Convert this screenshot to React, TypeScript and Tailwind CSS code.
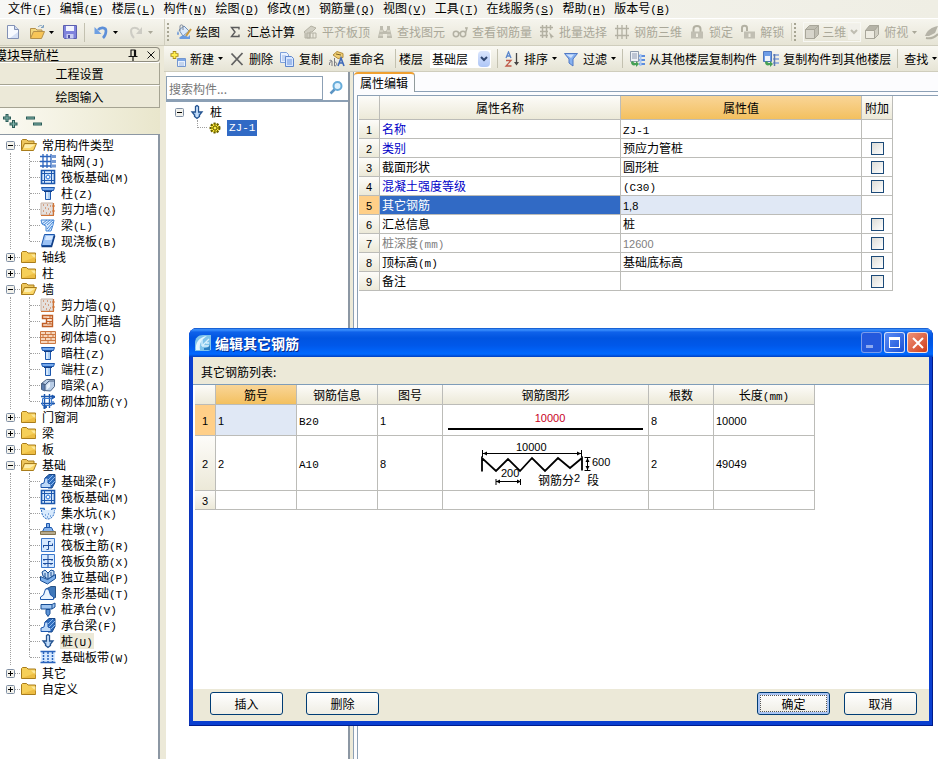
import { Fragment, useState } from 'react';
import type { ReactNode } from 'react';
import clsx from 'clsx';

/* ---------- Icons ---------- */

function Svg({ children, className }: { children: ReactNode; className?: string }) {
  return (
    <svg viewBox="0 0 16 16" className={clsx('h-4 w-4 shrink-0', className)} fill="none" aria-hidden="true">
      {children}
    </svg>
  );
}

const BLUE = '#1c57ad';
const LIGHT = '#a9cdf5';
const GRAY = '#b3b1a3';

const icons: Record<string, ReactNode> = {
  newFile: (
    <>
      <path d="M2.5 1.5h7l4 4v9h-11z" fill="#f7faff" stroke="#8291b5" />
      <path d="M9.5 1.5v4h4" fill="#cfdaf0" stroke="#8291b5" />
      <path d="M5 14h8V8z" fill="#d5e0f5" />
    </>
  ),
  open: (
    <>
      <path d="M1.5 14V4.500h5l1.500 1.500h5v3" fill="#f3d77e" stroke="#b5914a" />
      <path d="M1.500 14.500l3-7h11l-3 7z" fill="#f7c557" stroke="#b5914a" />
      <path d="M9 3c2-2 4-2 5 0M14.500 1v2.500H12" stroke="#7c9fc0" />
    </>
  ),
  save: (
    <>
      <path d="M1.500 1.500h13v13h-12l-1-1z" fill="#7f83dc" stroke="#5b5fae" />
      <path d="M4 2h8v5H4z" fill="#f2f4ff" />
      <path d="M4.500 10h7v4.500h-7z" fill="#c9cdf2" />
      <path d="M6 11h2v3H6z" fill="#4d50a0" />
    </>
  ),
  undo: (
    <>
      <path d="M5 6c2-3 8-3 8 1 0 3-1 5-3 7" stroke="#5d8fd8" strokeWidth="2.600" />
      <path d="M1.500 3v7h7z" fill="#6e9fe2" />
    </>
  ),
  redo: (
    <>
      <path d="M11 6C9 3 3 3 3 7c0 3 1 5 3 7" stroke="#cdccc4" strokeWidth="2" />
      <path d="M14 3v7H8z" fill="#cdccc4" />
    </>
  ),
  paint: (
    <>
      <path d="M3 6l5-4 5 5-6 5z" fill="#dbe9fa" stroke="#6f8fb8" />
      <path d="M4 7V2c0-1.500 3-1.500 3 0v4" stroke="#7d8799" />
      <path d="M2 7c-1 2-1 4 0 4s1-2 0-4z" fill="#4e85d6" />
      <path d="M15 5l-5 7" stroke="#c99b3f" strokeWidth="2" />
      <path d="M3 14c3-3 6-3 9-1l2-2v4H4z" fill="#6a9be0" />
    </>
  ),
  sigma: <path d="M12 5.500V3.500H4.500L8 8l-3.500 4.500H12v-2" stroke="#5b5b5b" strokeWidth="1.400" />,
  slab: (
    <>
      <path d="M2 8l7-6 5 2-4 4H8v6H3V9z" fill="#d1cfc3" stroke={GRAY} />
      <path d="M5 14V9h9v5zM8 9v5M11 9v5" stroke={GRAY} />
    </>
  ),
  binoculars: (
    <>
      <path d="M1 13l2-8V2h3v3l1 2h2l1-2V2h3v3l2 8v1h-5v-4H6v4H1z" fill="#bebcaf" />
      <path d="M3 7h3M10 7h3M2.500 11H6M10 11h3.500" stroke="#e8e6d9" />
    </>
  ),
  glasses: (
    <>
      <circle cx="4" cy="10" r="2.700" stroke={GRAY} strokeWidth="1.500" />
      <circle cx="11" cy="10" r="2.700" stroke={GRAY} strokeWidth="1.500" />
      <path d="M6.500 9h2M13.500 9l1.500-5h-2" stroke={GRAY} strokeWidth="1.500" />
    </>
  ),
  batch: (
    <>
      <path d="M1 3.500h13M1 7.500h8M1 11.500h8M3.500 1v13M7.500 1v13M11.500 1v5" stroke={GRAY} strokeWidth="1.500" />
      <path d="M10 8l5 5-2 .3L12 15z" fill={GRAY} />
    </>
  ),
  rebar3d: (
    <path d="M1 4.500h14M1 11.500h14M3.500 1v14M8 1v14M12.500 1v14" stroke={GRAY} strokeWidth="1.300" />
  ),
  lock: (
    <>
      <path d="M4.500 8V5c0-4 7-4 7 0v3" stroke={GRAY} strokeWidth="2" />
      <path d="M2 7.500h12v7H2z" fill="#c1bfb3" />
      <path d="M7 9.500h2V13H7z" fill="#efede1" />
    </>
  ),
  unlock: (
    <>
      <path d="M2 8V4c0-3 5-3 5 0v3" stroke={GRAY} strokeWidth="2" />
      <path d="M4 7.500h11v7H4z" fill="#c1bfb3" />
      <path d="M8.500 9.500h2V13h-2z" fill="#efede1" />
    </>
  ),
  cube: (
    <>
      <path d="M1.500 5.500h9v9h-9z" fill="#d7d5cb" stroke="#a8a69a" />
      <path d="M1.500 5.500l4-4h9l-4 4zM14.500 1.500v9l-4 4v-9z" fill="#c0beb2" stroke="#a8a69a" />
    </>
  ),
  cubeTop: (
    <>
      <path d="M1.500 6.500h9v8h-9z" fill="#eeece2" stroke="#a8a69a" />
      <path d="M1.500 6.500l4-5h9l-4 5z" fill="#b5b3a7" stroke="#a8a69a" />
      <path d="M14.500 1.500v9l-4 4v-8z" fill="#d1cfc3" stroke="#a8a69a" />
    </>
  ),
  orbit: (
    <>
      <path d="M1 12C3 6 8 3 14 2l-3 7-6 3z" fill="#b5b3a7" />
      <path d="M2 14c5 1 9-1 12-4" stroke={GRAY} strokeWidth="2" />
    </>
  ),
  create: (
    <>
      <path d="M4.500 0v8M.5 4h8" stroke="#a98b16" strokeWidth="3.500" />
      <path d="M4.500 1v6M1.500 4h6" stroke="#ffee52" strokeWidth="2" />
      <path d="M7.500 7.500h8v8h-8z" fill="#e9f1fd" stroke="#7396cf" />
      <path d="M8 8h7v2H8z" fill="#7ca6e6" />
      <path d="M9 12h5M9 14h5" stroke="#a0b8dd" />
    </>
  ),
  cross: <path d="M2.500 2.500l11 11.500M13.500 2L2.500 14" stroke="#626262" strokeWidth="1.800" />,
  copy: (
    <>
      <path d="M1.500 1.500h6l2 2v8h-8z" fill="#e7f0ff" stroke="#7da0da" />
      <path d="M3 5h4M3 7h4M3 9h4" stroke="#9db8e6" />
      <path d="M6.500 5.500h6l2 2v8h-8z" fill="#d7e6ff" stroke="#5e86cc" />
      <path d="M8 9h5M8 11h5M8 13h5" stroke="#6b93da" />
    </>
  ),
  rename: (
    <>
      <path d="M4 4l4-3.500 6 2v4l-5 1z" fill="#f1cf73" stroke="#b18b3b" />
      <path d="M7 3l5 1" stroke="#7d6225" />
      <path d="M.5 14c-1-3 2.500-4 2.500-4v5M3 10c-1-1-2-1-2.500 0M5.500 7v8c3 0 3-4 0-4" stroke="#7a7a80" />
      <path d="M9 15l3-8 3 8M10 12h4" stroke="#3e69b9" strokeWidth="1.600" />
    </>
  ),
  sort: (
    <>
      <path d="M2 7l2.500-6L7 7M3 5h3" stroke="#5a86cc" strokeWidth="1.300" />
      <path d="M2 9.500h5l-5 5.500h5.500" stroke="#bf5a4a" strokeWidth="1.300" />
      <path d="M12.500 2v11" stroke="#444" strokeWidth="1.300" />
      <path d="M10 11h5l-2.500 3.500z" fill="#444" />
    </>
  ),
  filter: (
    <>
      <path d="M1.500 2.500h13L10 8v7l-4-3V8z" fill="#86b1f0" stroke="#5079c5" />
      <path d="M3 3.500h8L8 7z" fill="#cfe1fb" />
    </>
  ),
  copyFloor: (
    <>
      <path d="M1.500.5h8v10h-8z" fill="#eef1f5" stroke="#8d9aab" />
      <path d="M3 3h5M3 5h5M3 7h5" stroke="#8c98b0" />
      <path d="M10 4h6v2h-6zM10 8h6v2h-6zM10 12h6v2h-6z" fill="#5d8ddd" />
      <path d="M11.500 3v12" stroke="#a9c7f4" strokeWidth="2" />
      <path d="M2 11c0 3 2 4 5 3v2l3-3-3-3v2c-2 0-2 0-3-2z" fill="#45a056" />
    </>
  ),
  copyFloorTo: (
    <>
      <path d="M.5.500h8v10h-8z" fill="#6c9ce6" stroke="#4e75bb" />
      <path d="M2 5h5v5H2z" fill="#eef3fc" />
      <path d="M10 3h6v2h-6zM10 7h6v2h-6zM10 11h6v2h-6z" fill="#9ab2dc" />
      <path d="M11.500 3v12" stroke="#5c78ad" strokeWidth="1.500" />
      <path d="M2 11c0 3 2 4 5 3v2l3-3-3-3v2c-2 0-2 0-3-2z" fill="#45a056" />
    </>
  ),
  folder: (
    <>
      <path d="M.5 13.500v-10l1-1h4l1.500 1.500h7.500v9.500z" fill="#f6cf58" stroke="#a87c1b" />
      <path d="M1 5.500h13.500V10L10 5.500z" fill="#fbe79a" />
      <path d="M1 13l13.500-5v5z" fill="#e8b035" opacity=".6" />
    </>
  ),
  folderOpen: (
    <>
      <path d="M.5 13.500v-10l1-1h4l1.500 1.500h6v3" fill="#eec75e" stroke="#a87c1b" />
      <path d="M.5 13.500l3-7h12l-3 7z" fill="#fbd768" stroke="#a87c1b" />
      <path d="M4 7.500h10L9 11H3z" fill="#fdeeae" />
    </>
  ),
  grid: (
    <path
      d="M0 3.500h11M0 8.500h11M0 13h11M3 1v14M7 1v14M11 1v14M13 2v3M13 7v3M13 11.500v3M15 2v3M15 7v3M15 11.500v3"
      stroke="#2b64bd"
      strokeWidth="1.300"
    />
  ),
  raft: (
    <>
      <path d="M1.500 1.500h13v13h-13z" fill="#d7e8fc" stroke={BLUE} strokeWidth="1.600" />
      <path d="M4.500 2v12M11.500 2v12M2 4.500h12M2 11.500h12" stroke={BLUE} />
      <path d="M8 4.500v7M4.500 8h7" stroke="#5791df" />
      <path d="M6.500 6.500h3v3h-3z" fill="#fff" stroke="#5791df" />
    </>
  ),
  column: (
    <>
      <path d="M1.500 2.500h13l-1 3h-11z" fill="#75a8ec" stroke={BLUE} />
      <path d="M5.500 5.500h5v9h-5z" fill={LIGHT} stroke={BLUE} />
      <path d="M7 6v8" stroke="#fff" />
      <path d="M4 6.500h8" stroke="#173f82" />
    </>
  ),
  shearWall: (
    <>
      <path d="M1 2h12v12H1z" fill="#e5e0dd" stroke="#c9b3a5" />
      <path d="M13.500 2v12M12 5h3M12 10h3M1 14.500h13" stroke="#d07335" strokeWidth="1.200" />
      <path d="M3 4h1M7 4h1M10 5h1M5 7h1M8 8h1M3 10h1M6 12h1M10 11h1M9 13h1" stroke="#c25f27" />
    </>
  ),
  beam: (
    <>
      <path d="M1 3h13l-1 5-2 6H6V9L2 7z" fill="#d8ebff" stroke="#4586d5" />
      <path d="M2 7l5-4M4 8l6-5M7 8l6-5M7 12l6-7M8 14l4-5" stroke="#4586d5" />
    </>
  ),
  castSlab: (
    <>
      <path d="M4.500 1.500h10l-3 11h-10z" fill="#9cc2f4" stroke={BLUE} />
      <path d="M6 3h7l-1.500 4H5z" fill="#d6e8ff" />
      <path d="M1.500 13.500h10l3.200-11" stroke="#123f85" strokeWidth="1.500" />
    </>
  ),
  doorWall: (
    <>
      <path d="M2.500 2.500h10v11h-10v-3h4v-5h-4z" fill="#fbe2cf" stroke="#c05e26" strokeWidth="1.400" />
      <path d="M7 5.500h5M7 8.500h5M7 11h5M10 3v2M10 9v2" stroke="#c05e26" />
    </>
  ),
  brick: (
    <>
      <path d="M.5 2.500h15v12H.5z" fill="#f7d7bd" stroke="#cc7842" />
      <path d="M1 5.500h14M1 8.500h14M1 11.500h14M5.500 3v2.500M11 3v2.500M8 6v2.500M3 6v2.500M13 6v2.500M5.500 9v2.500M11 9v2.500M8 12v2.500" stroke="#cc7842" />
    </>
  ),
  hiddenBeam: (
    <>
      <path d="M1.500 6.500l5-4h8v7l-4 4.500-6-.5V7z" fill="#b9cde6" stroke="#4c6385" />
      <path d="M1.500 6.500L5 8v6l-3.500-1.500z" fill="#5e7fb0" stroke="#4c6385" />
      <path d="M5 8l4-4h5" stroke="#4c6385" />
      <path d="M6.500 8.500L10 5v5l-3.500 3z" fill="#eaf2fc" />
    </>
  ),
  masonryBar: (
    <>
      <path d="M1 3.500h14M1 10.500h14M4.500 1v14M9.500 1v14" stroke={BLUE} strokeWidth="1.400" />
      <path d="M2.500 5.500h9v7h-9z" stroke="#3d7bd0" />
      <path d="M12 2l3 2-3 2zM4 12l3 2-3 2zM13 8v4" fill={BLUE} stroke={BLUE} />
    </>
  ),
  foundBeam: (
    <>
      <path d="M5 5l4-3.500h6v8L12 15H8z" fill="#2f6dbd" stroke="#174687" />
      <path d="M1 14.500V11l3-1 1-5h3v5l3 1v3.500z" fill="#bcd8f8" stroke={BLUE} />
      <path d="M8 7l5-5M9 10l6-6M11 12l4-4" stroke="#8db9ee" />
    </>
  ),
  sump: (
    <>
      <path d="M0 3.500h4l1 3 3 1 3-1 1-3h4" stroke="#2f6fc4" strokeWidth="1.400" />
      <path d="M1.500 5c0 5 2.500 9 6.500 9s6.500-4 6.500-9" fill="#d8eafd" stroke="#2f6fc4" strokeDasharray="2 1" />
      <path d="M5 10h1M8 9h1M10 11h1M7 12h1" stroke="#2f6fc4" />
    </>
  ),
  pier: (
    <>
      <path d="M6.500 2.500h3v4h-3zM2.500 10.500l2-4h7l2 4z" fill="#86b3ec" stroke={BLUE} />
      <path d="M.5 10.500h15v3H.5z" fill="#b7aa8c" stroke="#837452" />
    </>
  ),
  mainBar: (
    <>
      <path d="M1.500 1.500h13v13h-13z" fill="#d6e9ff" stroke="#3b78cb" />
      <path d="M8.500 4v8.500M3 8.500h10M3.500 8v2.500M12.500 6.500V9M6.500 12.500h2M8.500 4.500h2" stroke="#1c4d9d" />
    </>
  ),
  negBar: (
    <>
      <path d="M1.500 1.500h13v13h-13z" fill="#d6e9ff" stroke="#3b78cb" />
      <path d="M8 2v12M3 6.500h10M3 10.500h10M4 6v2M12 6v2M5 10v2M11 10v2" stroke="#1c4d9d" />
    </>
  ),
  isolated: (
    <>
      <path d="M.5 7.500l7 3 8-5v4l-8 5.500-7-3.500z" fill="#7eafe9" stroke="#174d94" />
      <path d="M3 7l-1-4 3-2 3 3 3-3 3 1v4l-6 4z" fill="#c3dbf5" stroke="#174d94" />
      <path d="M5 4v4M8 4v5M11 3v4" stroke="#174d94" />
    </>
  ),
  strip: (
    <>
      <path d="M6 4l5-2.500h4.500v11L12 14z" fill="#3e77b9" stroke="#275286" />
      <path d="M.5 14.500V12l3-2 2-6h3l2 6 3 2v2.500z" fill="#eaf4ff" stroke={BLUE} />
    </>
  ),
  cap: (
    <>
      <path d="M1 3.500h11l3-1.500v4l-3 2H1z" fill="#9fc5f1" stroke="#174d94" />
      <path d="M6 8.500h4v4l-2 3-2-3z" fill="#5e94d6" stroke="#174d94" />
      <path d="M12 4v4" stroke="#174d94" />
    </>
  ),
  pile: (
    <>
      <path d="M6.500 2.500l1.500-1 1.500 1v5.500h3.500l-2.500 3v1.500L8 14.500l-2.500-2V11L3 8h3.500z" fill="#a7caf1" stroke="#245390" strokeWidth="1.300" />
      <path d="M8 3v10" stroke="#e4f1ff" />
    </>
  ),
  strand: (
    <>
      <path d="M1 3h14v10H1z" fill="#d6e9ff" />
      <path d="M.5 2.500h15M.5 13.500h15" stroke="#2b64bd" strokeWidth="1.300" />
      <path d="M3.500 3v10M8 3v10M12.500 3v10" stroke="#2b64bd" strokeDasharray="2 1" strokeWidth="1.500" />
    </>
  ),
  gear: (
    <>
      <circle cx="8" cy="8" r="4.500" fill="#ffea35" stroke="#6a6100" strokeDasharray="2 1.200" strokeWidth="2" />
      <path d="M8 3v10M3 8h10M4.500 4.500l7 7M11.500 4.500l-7 7" stroke="#6a6100" strokeWidth=".8" />
      <circle cx="8" cy="8" r="2" fill="#fff04d" stroke="#6a6100" />
    </>
  ),
  search: (
    <>
      <circle cx="9.500" cy="6" r="4" fill="#dff1fd" stroke="#67acd9" strokeWidth="2" />
      <path d="M6.500 9.500L2.500 13.500" stroke="#5c95c4" strokeWidth="2.500" />
    </>
  ),
  plusPlus: (
    <>
      <path d="M5 1v8M1 5h8M11.500 7v8M7.500 11h8" stroke="#2b5c58" strokeWidth="3" />
      <path d="M5 2v6M2 5h6M11.500 8v6M8.500 11h6" stroke="#83b5ab" />
    </>
  ),
  minusMinus: (
    <>
      <path d="M0 5h9M7 11h9" stroke="#2b5c58" strokeWidth="3" />
      <path d="M1 5h7M8 11h7" stroke="#83b5ab" />
    </>
  ),
  pin: <path d="M5.500 3h5M6 3v6M9.500 3v6M10.500 3v6M3.500 9.500h9M8 10v4" stroke="#111" strokeWidth="1.200" />,
  close: <path d="M4.500 4.500l7 7M11.500 4.500l-7 7" stroke="#111" />,
  app: (
    <>
      <path d="M0 16V8C0 3 3 0 8 0h8v15c-2 1-4 1-6 1z" fill="#7fc3ea" />
      <path d="M1 15C0 8 4 2 12 1 7 4 4 8 5 15z" fill="#e3f6ff" />
      <path d="M7 5v6M7 11h7v3M8 10l6-6M11 8h3" stroke="#d8f1fd" strokeWidth="1.300" />
      <path d="M9 13c3 0 5-1 6-4v6H9z" fill="#2c7fc1" />
    </>
  ),
};

function Icon({ name, className }: { name: string; className?: string }) {
  return <Svg className={className}>{icons[name]}</Svg>;
}

/* Latin runs are set about half as wide as a Chinese character */
function Mono({ children }: { children: ReactNode }) {
  return <span className="font-['Liberation_Mono',monospace] text-[11px] leading-none">{children}</span>;
}

function Num({ children }: { children: ReactNode }) {
  return <span className="font-['Liberation_Sans',sans-serif] text-[11px] leading-none">{children}</span>;
}

function Mixed({ text }: { text: string }) {
  return (
    <>
      {text.split(/([ -~]+)/).map((part, i) => {
        if (/^[\d,]+$/.test(part)) return <Num key={i}>{part}</Num>;
        if (/^[ -~]+$/.test(part)) return <Mono key={i}>{part}</Mono>;
        return <Fragment key={i}>{part}</Fragment>;
      })}
    </>
  );
}

/* ---------- Menu and toolbars ---------- */

const menus = [
  ['文件', 'F'],
  ['编辑', 'E'],
  ['楼层', 'L'],
  ['构件', 'N'],
  ['绘图', 'D'],
  ['修改', 'M'],
  ['钢筋量', 'Q'],
  ['视图', 'V'],
  ['工具', 'T'],
  ['在线服务', 'S'],
  ['帮助', 'H'],
  ['版本号', 'B'],
];

function MenuBar() {
  return (
    <nav className="flex h-[18px] shrink-0 items-start gap-2 bg-gradient-to-r from-[#f7f7f5] to-[#efeee4] px-2">
      {menus.map(([label, key]) => (
        <button key={key} className="flex shrink-0 items-baseline whitespace-nowrap leading-4">
          {label}
          <Mono>
            (<u>{key}</u>)
          </Mono>
        </button>
      ))}
    </nav>
  );
}

function Arrow({ className }: { className?: string }) {
  return (
    <svg viewBox="0 0 5 3" className={clsx('h-[3px] w-[5px] shrink-0', className)} aria-hidden="true">
      <path d="M0 0h5L2.500 3z" fill="currentColor" />
    </svg>
  );
}

function Separator({ className }: { className?: string }) {
  return <span className={clsx('h-[19px] w-px shrink-0 bg-[#c3c1b0]', className)} />;
}

function Grip() {
  return <span className="h-[18px] w-0 shrink-0 border-l-2 border-dotted border-[#a7a593]" />;
}

interface ToolProps {
  icon?: string;
  label?: string;
  title?: string;
  arrow?: boolean;
  disabled?: boolean;
}

function Tool({ icon, label, title, arrow, disabled }: ToolProps) {
  return (
    <button
      disabled={disabled}
      aria-label={title ?? label}
      className="flex shrink-0 items-center gap-1 whitespace-nowrap leading-4 disabled:text-[#aaa899]"
    >
      {icon && <Icon name={icon} />}
      {label}
      {arrow && <Arrow />}
    </button>
  );
}

function MainToolbar() {
  return (
    <div className="flex h-7 shrink-0 items-center border-y border-t-white border-b-[#cfcdbd] bg-gradient-to-b from-[#f6f5ee] to-[#e6e4d5]">
      <div className="flex h-full w-[165px] shrink-0 items-center border-r border-[#cfcdbd] pl-[5px]">
        <Tool icon="newFile" title="新建" />
        <span className="ml-2 flex">
          <Tool icon="open" title="打开" arrow />
        </span>
        <span className="ml-2 flex">
          <Tool icon="save" title="保存" />
        </span>
        <Separator className="ml-1.5" />
        <span className="ml-2 flex gap-2.5">
          <Tool icon="undo" title="撤销" arrow />
          <Tool icon="redo" title="重做" arrow disabled />
        </span>
      </div>
      <div className="flex items-center gap-[7px] pl-0.5">
        <Grip />
        <Tool icon="paint" label="绘图" />
        <Tool icon="sigma" label="汇总计算" />
        <Tool icon="slab" label="平齐板顶" disabled />
        <Tool icon="binoculars" label="查找图元" disabled />
        <Tool icon="glasses" label="查看钢筋量" disabled />
        <Tool icon="batch" label="批量选择" disabled />
        <Tool icon="rebar3d" label="钢筋三维" disabled />
        <Tool icon="lock" label="锁定" disabled />
        <Tool icon="unlock" label="解锁" disabled />
        <span className="flex items-center border-l border-[#cfcdbd] pl-0.5">
          <Grip />
        </span>
        <span className="flex h-5 items-center border border-[#f8f8f4]">
          <Icon name="cube" />
          <select
            disabled
            aria-label="视图模式"
            className="w-7 appearance-none bg-transparent pl-0.5 leading-4 text-[#aaa899]"
          >
            <option>三维</option>
          </select>
          <ComboArrow disabled />
        </span>
        <span className="-ml-1 flex">
          <Tool icon="cubeTop" label="俯视" arrow disabled />
        </span>
        <Tool icon="orbit" title="动态观察" disabled />
      </div>
    </div>
  );
}

function ComboArrow({ disabled }: { disabled?: boolean }) {
  return (
    <span
      className={clsx(
        'pointer-events-none flex h-4 w-3 shrink-0 items-center justify-center',
        disabled ? 'bg-[#f1f0ea] text-[#bfbdb2]' : 'rounded-sm bg-gradient-to-b from-[#dbe6fd] to-[#aec6f6] text-[#2f4670]',
      )}
    >
      <svg viewBox="0 0 8 6" className="h-1.5 w-2" fill="none" aria-hidden="true">
        <path d="M1 1l3 3 3-3" stroke="currentColor" strokeWidth="2" />
      </svg>
    </span>
  );
}

function ComponentToolbar() {
  return (
    <div className="flex h-[26px] shrink-0 items-center gap-1.5 border-b border-[#cfcdbd] bg-gradient-to-b from-[#f9f8f2] to-[#e6e4d5] pl-1.5">
      <Tool icon="create" label="新建" arrow />
      <Tool icon="cross" label="删除" />
      <Tool icon="copy" label="复制" />
      <Tool icon="rename" label="重命名" />
      <div className="ml-1 flex items-center gap-[3px]">
        <Separator />
        <label htmlFor="floor" className="shrink-0">楼层</label>
        <span className="ml-1 flex h-[18px] items-center bg-white pr-px">
          <select id="floor" className="w-[48px] appearance-none bg-transparent pl-0.5 leading-4 outline-none">
            <option>基础层</option>
          </select>
          <ComboArrow />
        </span>
      </div>
      <Separator />
      <Tool icon="sort" label="排序" arrow />
      <Tool icon="filter" label="过滤" arrow />
      <Separator />
      <Tool icon="copyFloor" label="从其他楼层复制构件" />
      <Tool icon="copyFloorTo" label="复制构件到其他楼层" />
      <Separator />
      <Tool label="查找" arrow />
    </div>
  );
}

/* ---------- Navigation tree ---------- */

interface Group {
  label: string;
  items?: [string, string][];
}

const groups: Group[] = [
  {
    label: '常用构件类型',
    items: [
      ['grid', '轴网(J)'],
      ['raft', '筏板基础(M)'],
      ['column', '柱(Z)'],
      ['shearWall', '剪力墙(Q)'],
      ['beam', '梁(L)'],
      ['castSlab', '现浇板(B)'],
    ],
  },
  { label: '轴线' },
  { label: '柱' },
  {
    label: '墙',
    items: [
      ['shearWall', '剪力墙(Q)'],
      ['doorWall', '人防门框墙'],
      ['brick', '砌体墙(Q)'],
      ['column', '暗柱(Z)'],
      ['column', '端柱(Z)'],
      ['hiddenBeam', '暗梁(A)'],
      ['masonryBar', '砌体加筋(Y)'],
    ],
  },
  { label: '门窗洞' },
  { label: '梁' },
  { label: '板' },
  {
    label: '基础',
    items: [
      ['foundBeam', '基础梁(F)'],
      ['raft', '筏板基础(M)'],
      ['sump', '集水坑(K)'],
      ['pier', '柱墩(Y)'],
      ['mainBar', '筏板主筋(R)'],
      ['negBar', '筏板负筋(X)'],
      ['isolated', '独立基础(P)'],
      ['strip', '条形基础(T)'],
      ['cap', '桩承台(V)'],
      ['foundBeam', '承台梁(F)'],
      ['pile', '桩(U)'],
      ['strand', '基础板带(W)'],
    ],
  },
  { label: '其它' },
  { label: '自定义' },
];

function ExpandBox({ open }: { open: boolean }) {
  return (
    <svg viewBox="0 0 9 9" className="h-[9px] w-[9px] shrink-0" aria-hidden="true">
      <rect x=".5" y=".5" width="8" height="8" rx="1" fill="#f3f2ec" stroke="#7f8ea3" />
      <path d={open ? 'M2 4.500h5' : 'M2 4.500h5M4.500 2v5'} stroke="#000" />
    </svg>
  );
}

function NavTree() {
  const [selected, setSelected] = useState('桩(U)');
  return (
    <ul className="flex-1 overflow-hidden border-r-2 border-t border-[#8c97a3] bg-white pt-0.5">
      {groups.map((group, g) => {
        const last = g === groups.length - 1;
        return (
          <li key={group.label}>
            <button className="flex h-4 items-center whitespace-nowrap pl-1.5 leading-4">
              <ExpandBox open={!!group.items} />
              <span className="mr-px w-[5px] border-t border-dotted border-[#a0a0a0]" />
              <Icon name={group.items ? 'folderOpen' : 'folder'} />
              <span className="pl-[5px]">{group.label}</span>
            </button>
            {group.items && (
              <ul className={clsx('ml-2.5', !last && 'border-l border-dotted border-[#a0a0a0]')}>
                {group.items.map(([icon, label], i) => (
                  <li key={label} className="flex h-4 items-center pl-[18px]">
                    <span
                      className={clsx(
                        'border-l border-dotted border-[#a0a0a0]',
                        i === group.items!.length - 1 ? 'h-2 self-start' : 'h-4',
                      )}
                    />
                    <span className="w-2.5 border-t border-dotted border-[#a0a0a0]" />
                    <button onClick={() => setSelected(label)} className="flex items-center whitespace-nowrap leading-4">
                      <Icon name={icon} />
                      <span className={clsx('ml-1 px-px', label === selected && 'bg-[#ece9d8]')}>
                        <Mixed text={label} />
                      </span>
                    </button>
                  </li>
                ))}
              </ul>
            )}
          </li>
        );
      })}
    </ul>
  );
}

function NavPanel() {
  return (
    <aside className="flex w-[160px] shrink-0 flex-col bg-[#ece9d8]">
      <div className="mt-px flex h-[15px] items-center overflow-hidden rounded-r-sm border border-l-0 border-[#8f8d80]">
        <h2 className="-ml-1.5 flex-1 whitespace-nowrap text-[13px] leading-[13px]">模块导航栏</h2>
        <button aria-label="固定" className="mr-0.5">
          <Icon name="pin" className="h-3.5 w-3.5" />
        </button>
        <button aria-label="关闭" className="flex">
          <Icon name="close" />
        </button>
      </div>
      {['工程设置', '绘图输入'].map((label) => (
        <button key={label} className="h-[23px] shrink-0 border-b border-r border-t border-b-[#a5a392] border-r-[#a5a392] border-t-white">
          {label}
        </button>
      ))}
      <div className="flex h-[26px] shrink-0 items-center gap-2 bg-gradient-to-r from-[#fbfaf2] to-[#e9e6cc] pl-0.5">
        <button aria-label="全部展开">
          <Icon name="plusPlus" />
        </button>
        <button aria-label="全部折叠">
          <Icon name="minusMinus" />
        </button>
      </div>
      <NavTree />
    </aside>
  );
}

function ComponentPanel() {
  return (
    <section className="flex w-[184px] shrink-0 flex-col border-r-2 border-[#8c97a3] bg-white">
      <div className="flex h-[30px] shrink-0 items-center border-b-2 border-[#8ca0b5] pt-1">
        <input
          aria-label="搜索构件"
          placeholder="搜索构件..."
          className="h-6 min-w-0 flex-1 border border-[#8ca0b5] px-0.5 placeholder:text-[#777]"
        />
        <button aria-label="搜索" className="flex w-[25px] justify-center">
          <Icon name="search" />
        </button>
      </div>
      <ul className="pl-[9px] pt-0.5">
        <li>
          <button className="flex h-4 items-center">
            <ExpandBox open />
            <Icon name="pile" className="ml-[5px]" />
            <span className="pl-[5px]">桩</span>
          </button>
          <ul>
            <li className="flex h-4 items-center pl-[22px]">
              <span className="h-2 w-2.5 self-start border-b border-l border-dotted border-[#a0a0a0]" />
              <Icon name="gear" />
              <button className="ml-1 flex h-4 items-center bg-[#316ac5] px-0.5 text-white">
                <Mixed text="ZJ-1" />
              </button>
            </li>
          </ul>
        </li>
      </ul>
    </section>
  );
}

/* ---------- Property table ---------- */

interface Property {
  name: string;
  value: string;
  tone?: 'key' | 'muted';
  check?: boolean;
}

const properties: Property[] = [
  { name: '名称', value: 'ZJ-1', tone: 'key' },
  { name: '类别', value: '预应力管桩', tone: 'key', check: true },
  { name: '截面形状', value: '圆形桩', check: true },
  { name: '混凝土强度等级', value: '(C30)', tone: 'key', check: true },
  { name: '其它钢筋', value: '1,8' },
  { name: '汇总信息', value: '桩', check: true },
  { name: '桩深度(mm)', value: '12600', tone: 'muted', check: true },
  { name: '顶标高(m)', value: '基础底标高', check: true },
  { name: '备注', value: '', check: true },
];

const cell = 'border-b border-r border-[#bcbcb8] p-0 font-normal';
const head = 'bg-gradient-to-b from-[#fdfcf9] to-[#ece9d8]';
const headActive = 'bg-gradient-to-b from-[#f9d596] to-[#f3c05e]';

function PropertyPanel() {
  const [active, setActive] = useState(4);
  return (
    <section className="ml-[3px] flex min-w-0 flex-1 flex-col border-l border-[#8ca0b5] bg-[#fcfcfe]">
      <div className="flex h-5 shrink-0 border-b border-[#8ca0b5]">
        <button className="-mb-px h-5 rounded-t-sm border-r border-t-2 border-r-[#919b9c] border-t-[#f0a030] bg-[#fcfcfe] px-1.5 leading-4">
          属性编辑
        </button>
      </div>
      <div className="ml-[3px] mt-[3px] flex-1 border-l border-t border-[#8ca0b5] bg-white pl-px">
        <table className="w-[534px] table-fixed border-separate border-spacing-0 leading-4">
          <colgroup>
            <col className="w-[21px]" />
            <col className="w-[241px]" />
            <col className="w-[241px]" />
            <col className="w-[31px]" />
          </colgroup>
          <thead>
            <tr className="h-[24px]">
              <th className={clsx(cell, head)} />
              <th className={clsx(cell, head)}>属性名称</th>
              <th className={clsx(cell, headActive)}>属性值</th>
              <th className={clsx(cell, head)}>附加</th>
            </tr>
          </thead>
          <tbody>
            {properties.map((row, i) => {
              const on = i === active;
              return (
                <tr key={row.name} onClick={() => setActive(i)} className="h-[19px]">
                  <th className={clsx(cell, on ? 'bg-[#ffcf88]' : head)}>
                    <Num>{i + 1}</Num>
                  </th>
                  <td
                    className={clsx(
                      cell,
                      'pl-0.5',
                      on && 'bg-[#316ac5] text-white',
                      !on && row.tone === 'key' && 'text-[#0000c8]',
                      row.tone === 'muted' && 'text-[#808080]',
                    )}
                  >
                    <Mixed text={row.name} />
                  </td>
                  <td
                    className={clsx(cell, 'pl-0.5', on && 'bg-[#e0e8f5]', row.tone === 'muted' && 'text-[#808080]')}
                  >
                    <Mixed text={row.value} />
                  </td>
                  <td className={cell}>
                    {row.check && (
                      <input
                        type="checkbox"
                        aria-label={`附加 ${row.name}`}
                        className="mx-auto block h-[13px] w-[13px] appearance-none border border-[#1c4a78] bg-gradient-to-br from-[#dcdcd7] to-white checked:bg-[#316ac5]"
                      />
                    )}
                  </td>
                </tr>
              );
            })}
          </tbody>
        </table>
      </div>
    </section>
  );
}

/* ---------- Rebar dialog ---------- */

function StraightBar() {
  return (
    <svg viewBox="0 0 205 30" className="block h-[30px] w-[205px]" aria-hidden="true">
      <text x="107" y="17" textAnchor="middle" fill="#c8001e" className="font-['Liberation_Sans',sans-serif] text-[11px]">
        10000
      </text>
      <path d="M5 24h195" stroke="#000" strokeWidth="2" />
    </svg>
  );
}

function ZigzagBar() {
  return (
    <svg viewBox="0 0 205 54" className="block h-[54px] w-[205px]" fill="none" stroke="#000" aria-hidden="true">
      <path d="M39 35.500V22l14 13 12-12 12 12 12-13 13 13 13-13 12 10 12-10v12.500" strokeWidth="1.800" />
      <path d="M39.500 14v7M138.500 14v7M39.500 17.500h99M53 43v6M77.500 43v6M53 45.500h25M144.500 21.500v13M141.500 21.500h6M141.500 34.500h6" />
      <path
        d="M40 17.500l4-2v4zM138 17.500l-4-2v4zM53 45.500l4-2v4zM78 45.500l-4-2v4zM144.500 22l-2 4h4zM144.500 34l-2-4h4z"
        fill="#000"
        stroke="none"
      />
      <g fill="#000" stroke="none" className="font-['Liberation_Sans',sans-serif] text-[11px]">
        <text x="73" y="15">10000</text>
        <text x="58" y="41">200</text>
        <text x="149" y="30">600</text>
        <text x="131" y="46">2</text>
      </g>
      <g fill="#000" stroke="none" className="text-[12px]">
        <text x="95" y="49">钢筋分</text>
        <text x="144" y="49">段</text>
      </g>
    </svg>
  );
}

const rebars = [
  { no: '1', info: 'B20', shape: '1', drawing: <StraightBar />, count: '8', length: '10000', height: 'h-[31px]' },
  { no: '2', info: 'A10', shape: '8', drawing: <ZigzagBar />, count: '2', length: '49049', height: 'h-[55px]' },
  { no: '', info: '', shape: '', drawing: null, count: '', length: '', height: 'h-[19px]' },
];

function DialogButton({ label, primary }: { label: string; primary?: boolean }) {
  return (
    <button
      className={clsx(
        'h-[23px] w-[73px] rounded-[3px] border border-[#003c74] bg-gradient-to-b from-white to-[#efede4]',
        primary && 'shadow-[inset_0_0_0_2px_#aac4f2] outline-dotted outline-1 -outline-offset-4 outline-[#555]',
      )}
    >
      {label}
    </button>
  );
}

function RebarDialog() {
  const caption = 'flex h-[21px] w-[21px] items-center justify-center rounded-[3px] border';
  return (
    <div
      role="dialog"
      aria-labelledby="rebar-title"
      className="absolute left-[189px] right-[5px] top-[328px] flex h-[398px] flex-col rounded-t-lg bg-[#0a3fd0] px-1 pb-[5px] shadow-[inset_-1px_-1px_0_#001c8c,inset_1px_0_0_#0c33b8]"
    >
      <header className="-mx-1 flex h-[29px] shrink-0 items-center gap-0.5 rounded-t-lg bg-[linear-gradient(180deg,#0a4fc4_0%,#3d93ff_6%,#0f62ea_14%,#0054e0_35%,#0058ea_60%,#0069ff_90%,#003fc0_100%)] pl-1.5 pr-[5px]">
        <Icon name="app" />
        <h2 id="rebar-title" className="flex-1 pl-0.5 text-sm font-bold leading-4 text-white [text-shadow:1px_1px_#06298a]">
          编辑其它钢筋
        </h2>
        <button aria-label="最小化" className={clsx(caption, 'border-white/40 bg-[#2459dd]')}>
          <span className="mr-1 mt-2 h-[3px] w-[7px] bg-[#8fa9ee]" />
        </button>
        <button aria-label="最大化" className={clsx(caption, 'border-white/80 bg-gradient-to-br from-[#5a8bf5] to-[#1a4fd6]')}>
          <span className="h-[11px] w-[11px] border border-t-[3px] border-white" />
        </button>
        <button aria-label="关闭" className={clsx(caption, 'border-white/80 bg-gradient-to-br from-[#ee9076] to-[#cf3a12]')}>
          <svg viewBox="0 0 12 12" className="h-3 w-3" aria-hidden="true">
            <path d="M1 1l10 10M11 1L1 11" stroke="#fff" strokeWidth="2" />
          </svg>
        </button>
      </header>
      <div className="flex h-[28px] shrink-0 items-center border-b border-[#7f9db9] bg-[#ece9d8] px-2 pt-0.5">
        其它钢筋列表:
      </div>
      <div className="flex-1 bg-white pl-0.5">
        <table className="w-[620px] table-fixed border-separate border-spacing-0 text-left leading-4">
          <colgroup>
            <col className="w-[21px]" />
            <col className="w-[81px]" />
            <col className="w-[81px]" />
            <col className="w-[65px]" />
            <col className="w-[206px]" />
            <col className="w-[65px]" />
            <col className="w-[101px]" />
          </colgroup>
          <thead>
            <tr className="h-[20px] text-center">
              <th className={clsx(cell, head)} />
              {['筋号', '钢筋信息', '图号', '钢筋图形', '根数', '长度(mm)'].map((title, i) => (
                <th key={title} className={clsx(cell, i === 0 ? headActive : head)}>
                  <Mixed text={title} />
                </th>
              ))}
            </tr>
          </thead>
          <tbody>
            {rebars.map((row, i) => (
              <tr key={i} className={row.height}>
                <th className={clsx(cell, 'text-center', i === 0 ? 'bg-[#ffcf88]' : head)}>
                  <Num>{i + 1}</Num>
                </th>
                <td className={clsx(cell, 'pl-0.5', i === 0 && 'bg-[#e0e8f5]')}>
                  <Num>{row.no}</Num>
                </td>
                <td className={clsx(cell, 'pl-0.5')}>
                  <Mixed text={row.info} />
                </td>
                <td className={clsx(cell, 'pl-0.5')}>
                  <Num>{row.shape}</Num>
                </td>
                <td className={cell}>{row.drawing}</td>
                <td className={clsx(cell, 'pl-0.5')}>
                  <Num>{row.count}</Num>
                </td>
                <td className={clsx(cell, 'pl-0.5')}>
                  <Num>{row.length}</Num>
                </td>
              </tr>
            ))}
          </tbody>
        </table>
      </div>
      <footer className="flex h-8 shrink-0 items-start justify-between bg-[#ece9d8] pl-[17px] pr-3 pt-[3px]">
        <div className="flex gap-[23px]">
          <DialogButton label="插入" />
          <DialogButton label="删除" />
        </div>
        <div className="flex gap-3.5">
          <DialogButton label="确定" primary />
          <DialogButton label="取消" />
        </div>
      </footer>
    </div>
  );
}

export default function App() {
  return (
    <div className="relative flex h-screen flex-col overflow-hidden bg-[#ece9d8] font-['Noto_Sans_CJK_SC',sans-serif] text-xs text-black">
      <MenuBar />
      <MainToolbar />
      <div className="flex min-h-0 flex-1">
        <NavPanel />
        <div className="ml-1 flex min-w-0 flex-1 flex-col">
          <ComponentToolbar />
          <div className="flex min-h-0 flex-1 pl-0.5">
            <ComponentPanel />
            <PropertyPanel />
          </div>
        </div>
      </div>
      <RebarDialog />
    </div>
  );
}
